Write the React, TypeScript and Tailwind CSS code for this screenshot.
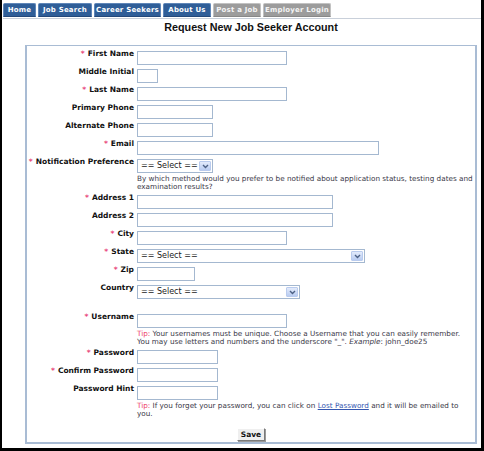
import React from 'react';

const tabs = [
  { label: 'Home', w: 'w-[33px]', on: true },
  { label: 'Job Search', w: 'w-[54px]', on: true },
  { label: 'Career Seekers', w: 'w-[67px]', on: true },
  { label: 'About Us', w: 'w-[48px]', on: true },
  { label: 'Post a Job', w: 'w-[48px]', on: false },
  { label: 'Employer Login', w: 'w-[68px]', on: false },
];

const Row = ({ label, req, children }: { label: string; req?: boolean; children: React.ReactNode }) => (
  <div className="flex items-start">
    <div className="w-[110px] shrink-0 pr-[3px] text-right font-bold text-[7.5px] leading-[10px] whitespace-nowrap text-[#111]">
      {req && <span className="text-[#e8457a] mr-[3px]">*</span>}
      {label}
    </div>
    <div className="pt-[2px] pb-[2px]">{children}</div>
  </div>
);

const Field = ({ w }: { w: string }) => (
  <input type="text" className={`block h-[14px] ${w} border border-[#a4b8d0] bg-white outline-none`} />
);

const Select = ({ w }: { w: string }) => (
  <div className={`flex h-[14px] ${w} border border-[#a4b8d0] bg-white`}>
    <div className="flex-1 pl-[3px] text-[8px] leading-[12px] text-[#222]">== Select ==</div>
    <div className="w-[12px] m-[1px] flex items-center justify-center rounded-[1px] border border-[#b9cbee] bg-gradient-to-b from-[#e3ebfb] to-[#b9ccf1]">
      <svg width="7" height="5" viewBox="0 0 7 5">
        <path d="M1 1 L3.5 3.5 L6 1" fill="none" stroke="#4d6185" strokeWidth="1.4" />
      </svg>
    </div>
  </div>
);

const Tip = ({ children }: { children: React.ReactNode }) => (
  <div className="mt-[2px] text-[7.25px] leading-[8px] text-[#3a3848] whitespace-nowrap">{children}</div>
);

export default function App() {
  return (
    <div className="w-[484px] h-[451px] bg-white border-l-2 border-r-[3px] border-b-[3px] border-black overflow-hidden font-['DejaVu_Sans',sans-serif]">
      {/* tab bar */}
      <div className="pl-[1px] pt-[3px]">
        <div className="flex gap-[2px] h-[14px]">
          {tabs.map(t => (
            <div
              key={t.label}
              className={`${t.w} h-full flex items-center justify-center rounded-t-[2px] border text-[7px] font-bold tracking-[0.2px] ${
                t.on
                  ? 'bg-[#2f5e98] border-[#5f86b8] border-b-[#23487a] text-white'
                  : 'bg-[#9c9c9c] border-[#c2c2c2] border-b-[#888] text-[#f4f4f4]'
              }`}
            >
              {t.label}
            </div>
          ))}
        </div>
        <div className="mt-[1px] h-[1px] bg-[#c9d0da]" />
      </div>

      <div className="ml-[23px] mr-[4px]">
        <h1 className="text-center font-['Liberation_Sans',Arial,sans-serif] font-bold text-[10.75px] leading-[16px] text-[#111]">
          Request New Job Seeker Account
        </h1>

        <div className="mt-[10px] border-t border-l-2 border-r-2 border-b-2 border-[#a9bcd4] pt-[3px] pb-[1px]">
          <Row label="First Name" req><Field w="w-[150px]" /></Row>
          <Row label="Middle Initial"><Field w="w-[21px]" /></Row>
          <Row label="Last Name" req><Field w="w-[150px]" /></Row>
          <Row label="Primary Phone"><Field w="w-[76px]" /></Row>
          <Row label="Alternate Phone"><Field w="w-[76px]" /></Row>
          <Row label="Email" req><Field w="w-[242px]" /></Row>
          <Row label="Notification Preference" req>
            <Select w="w-[76px]" />
            <Tip>
              By which method would you prefer to be notified about application status, testing dates and
              <br />
              examination results?
            </Tip>
          </Row>
          <Row label="Address 1" req><Field w="w-[196px]" /></Row>
          <Row label="Address 2"><Field w="w-[196px]" /></Row>
          <Row label="City" req><Field w="w-[150px]" /></Row>
          <Row label="State" req><Select w="w-[228px]" /></Row>
          <Row label="Zip" req><Field w="w-[58px]" /></Row>
          <Row label="Country"><Select w="w-[163px]" /></Row>

          <div className="h-[11px]" />

          <Row label="Username" req>
            <Field w="w-[150px]" />
            <Tip>
              <span className="text-[#ee4468]">Tip:</span> Your usernames must be unique. Choose a Username that you can easily remember.
              <br />
              You may use letters and numbers and the underscore "_". <i>Example</i>: john_doe25
            </Tip>
          </Row>
          <Row label="Password" req><Field w="w-[81px]" /></Row>
          <Row label="Confirm Password" req><Field w="w-[81px]" /></Row>
          <Row label="Password Hint">
            <Field w="w-[81px]" />
            <Tip>
              <span className="text-[#ee4468]">Tip:</span> If you forget your password, you can click on{' '}
              <span className="text-[#3557b0] underline">Lost Password</span> and it will be emailed to
              <br />
              you.
            </Tip>
          </Row>

          <div className="mt-[8px] flex justify-center">
            <button className="w-[28px] h-[13px] flex items-center justify-center border border-t-white border-l-white border-r-[#7a7a7a] border-b-[#7a7a7a] bg-[#efefef] text-[7.5px] font-bold leading-none text-[#111] shadow-[1px_1px_0_#9a9a9a]">
              Save
            </button>
          </div>
        </div>
      </div>
    </div>
  );
}
